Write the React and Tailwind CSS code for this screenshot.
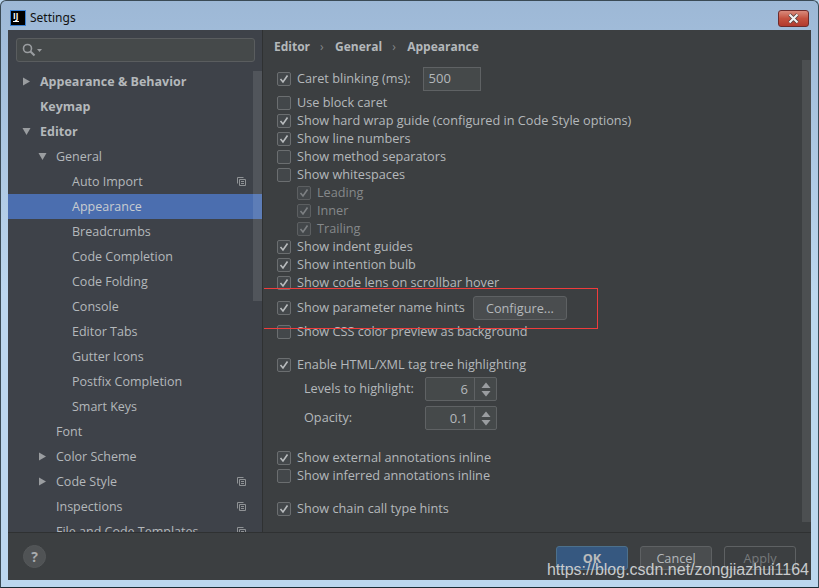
import React from "react";

const FONT = { fontFamily: '"Open Sans", "Noto Sans", sans-serif' };

const TREE = [
  { label: "Appearance & Behavior", indent: 32, bold: true, arrow: "right" },
  { label: "Keymap", indent: 32, bold: true },
  { label: "Editor", indent: 32, bold: true, arrow: "down" },
  { label: "General", indent: 48, arrow: "down" },
  { label: "Auto Import", indent: 64, copy: true },
  { label: "Appearance", indent: 64, selected: true },
  { label: "Breadcrumbs", indent: 64 },
  { label: "Code Completion", indent: 64 },
  { label: "Code Folding", indent: 64 },
  { label: "Console", indent: 64 },
  { label: "Editor Tabs", indent: 64 },
  { label: "Gutter Icons", indent: 64 },
  { label: "Postfix Completion", indent: 64 },
  { label: "Smart Keys", indent: 64 },
  { label: "Font", indent: 48 },
  { label: "Color Scheme", indent: 48, arrow: "right" },
  { label: "Code Style", indent: 48, arrow: "right", copy: true },
  { label: "Inspections", indent: 48, copy: true },
  { label: "File and Code Templates", indent: 48, copy: true },
];

function Arrow({ dir, indent }) {
  return (
    <svg width="9" height="9" viewBox="0 0 9 9" className="absolute top-[8px]" style={{ left: indent - 18 }}>
      {dir === "right" ? <path d="M1 0.5 L8 4.5 L1 8.5 Z" fill="#9a9da0" /> : <path d="M0.5 1 L8.5 1 L4.5 8 Z" fill="#9a9da0" />}
    </svg>
  );
}

function CopyIcon() {
  return (
    <svg width="9" height="9" viewBox="0 0 9 9" className="absolute left-[229px] top-[8px]" fill="none" stroke="#8f9295" strokeWidth="1">
      <path d="M0.5 6.5 V0.5 H6.5" />
      <path d="M2.5 2.5 H8.5 V8.5 H2.5 Z" />
      <path d="M4 4.5 H7 M4 6.5 H7" />
    </svg>
  );
}

function TreeRow({ item }) {
  return (
    <div
      className={`relative h-[25px] shrink-0 leading-[25px] text-[12.5px] whitespace-nowrap ${item.selected ? "bg-[#4b6eaf] text-[#c8ccd0]" : "text-[#b4b8bb]"} ${item.bold ? "font-bold" : ""}`}
      style={{ paddingLeft: item.indent }}
    >
      {item.arrow && <Arrow dir={item.arrow} indent={item.indent} />}
      {item.label}
      {item.copy && <CopyIcon />}
    </div>
  );
}

function Check({ checked, dim }) {
  return (
    <span className={`flex items-center justify-center w-[14px] h-[14px] shrink-0 rounded-[2px] border ${dim ? "border-[#5c5f61]" : "border-[#6b6e70]"} bg-[#43474a]`}>
      {checked && (
        <svg width="10" height="10" viewBox="0 0 10 10" fill="none" stroke={dim ? "#7d8083" : "#b9bcbe"} strokeWidth="1.6">
          <path d="M1.5 5 L4 8 L8.5 1.5" />
        </svg>
      )}
    </span>
  );
}

function CheckRow({ label, checked, dim, className = "", children }) {
  return (
    <div className={`flex items-center h-[18px] gap-[6px] ${dim ? "pl-[20px]" : ""} ${className}`}>
      <Check checked={checked} dim={dim} />
      <span className={`text-[12.7px] whitespace-nowrap ${dim ? "text-[#85888a]" : "text-[#b4b8bb]"}`}>{label}</span>
      {children}
    </div>
  );
}

function Spinner({ label, value, className = "" }) {
  return (
    <div className={`flex items-center h-[24px] pl-[27px] ${className}`}>
      <span className="w-[121px] text-[12.7px] text-[#b4b8bb] whitespace-nowrap">{label}</span>
      <div className="flex h-[24px] w-[72px] rounded-[2px] border border-[#5f6264] bg-[#45494a]">
        <div className="w-[49px] pr-[6px] text-right text-[13px] leading-[22px] text-[#b4b8bb] border-r border-[#5f6264]">{value}</div>
        <div className="flex flex-1 items-center justify-center">
          <svg width="10" height="15" viewBox="0 0 10 15" fill="#9a9da0">
            <path d="M5 0.5 L9.5 6 H0.5 Z" />
            <path d="M5 14.5 L9.5 9 H0.5 Z" />
          </svg>
        </div>
      </div>
    </div>
  );
}

function DialogButton({ label, variant }) {
  const styles = {
    ok: "bg-[#365880] border-[#4c708c] text-[#bbbbbb] font-bold",
    cancel: "bg-[#4a4d4f] border-[#5e6163] text-[#b4b8bb]",
    apply: "bg-[#3c3f41] border-[#5e6163] text-[#777a7c]",
  };
  return (
    <div className={`w-[72px] h-[24px] rounded-[3px] border text-center text-[12.7px] leading-[22px] overflow-hidden ${styles[variant]}`}>
      {label}
    </div>
  );
}

export default function App() {
  return (
    <div className="relative w-[819px] h-[588px] overflow-hidden bg-[#b9d5ee]" style={FONT}>
      <div className="flex flex-col w-full h-full rounded-t-[6px] border border-[#3a4a55] border-b-[#1a2a33] bg-gradient-to-b from-[#9db8d6] via-[#bcd6ee] to-[#bcd6ee] pl-[7px] pr-[7px] pb-[7px]">
        <div className="relative flex items-center h-[29px] shrink-0 gap-[4px] pl-[2px] pt-[5px] text-[12px] text-[#111111]">
          <div className="flex flex-col w-[16px] h-[16px] bg-black border border-[#3b82d6] px-[2px] pt-[1px] text-white">
            <span className="text-[8px] leading-[8px] font-bold">IJ</span>
            <span className="mt-[1px] w-[6px] h-[1px] bg-white" />
          </div>
          <span style={{ fontFamily: '"Noto Sans", sans-serif' }}>Settings</span>
          <div className="absolute right-[2px] top-[9px] flex items-center justify-center w-[31px] h-[17px] rounded-[3px] border border-[#6d2b2b] bg-gradient-to-b from-[#d98a7c] via-[#c4513f] to-[#b23a2e]">
            <svg width="13" height="11" viewBox="0 0 13 11" fill="none">
              <path d="M2.5 1.5 L10.5 9.5 M10.5 1.5 L2.5 9.5" stroke="#4a3a3a" strokeWidth="3.6" />
              <path d="M2.5 1.5 L10.5 9.5 M10.5 1.5 L2.5 9.5" stroke="#f2f2f2" strokeWidth="2.2" />
            </svg>
          </div>
        </div>

        <div className="flex flex-col flex-1 min-h-0 bg-[#3c3f41]">
          <div className="flex flex-1 min-h-0 border-b border-[#2f3132]">
            <aside className="relative flex flex-col w-[255px] shrink-0 overflow-hidden bg-[#3e4249] border-r border-[#2f3132]">
              <div className="flex items-center h-[24px] ml-[8px] mr-[7px] mt-[8px] mb-[7px] shrink-0 gap-[1px] pl-[5px] rounded-[3px] border border-[#5a5d5f] bg-[#45494a]">
                <svg width="14" height="14" viewBox="0 0 14 14" fill="none" stroke="#9a9da0" strokeWidth="1.6">
                  <circle cx="5.5" cy="5.5" r="4" />
                  <path d="M8.5 8.5 L12.5 12.5" strokeWidth="2.2" />
                </svg>
                <svg width="5" height="3" viewBox="0 0 5 3" fill="#9a9da0"><path d="M0 0 H5 L2.5 3 Z" /></svg>
              </div>
              {TREE.map((item) => <TreeRow key={item.label} item={item} />)}
              <div className="absolute right-[0px] top-[41px] w-[9px] h-[230px] bg-white/10" />
            </aside>

            <main className="relative flex-1 min-w-0 pl-[14px] pt-[8px]">
              <div className="flex items-center h-[17px] -ml-[3px] gap-[10px] text-[12px] font-bold text-[#b4b8bb]">
                <span>Editor</span>
                <span className="w-[5px] font-normal text-[#85888a]">›</span>
                <span>General</span>
                <span className="w-[5px] font-normal text-[#85888a]">›</span>
                <span>Appearance</span>
              </div>
              <div className="flex items-center h-[24px] mt-[12px] mb-[3px] gap-[6px]">
                <Check checked />
                <span className="text-[12.7px] text-[#b4b8bb]">Caret blinking (ms):</span>
                <div className="ml-[6px] w-[58px] h-[24px] pl-[5px] border border-[#5f6264] bg-[#45494a] text-[13px] leading-[20px] text-[#b4b8bb]">500</div>
              </div>
              <CheckRow label="Use block caret" />
              <CheckRow checked label="Show hard wrap guide (configured in Code Style options)" />
              <CheckRow checked label="Show line numbers" />
              <CheckRow label="Show method separators" />
              <CheckRow label="Show whitespaces" />
              <CheckRow dim checked label="Leading" />
              <CheckRow dim checked label="Inner" />
              <CheckRow dim checked label="Trailing" />
              <CheckRow checked label="Show indent guides" />
              <CheckRow checked label="Show intention bulb" />
              <CheckRow checked label="Show code lens on scrollbar hover" />
              <CheckRow checked label="Show parameter name hints" className="mt-[7px]">
                <div className="ml-[2px] w-[94px] h-[24px] rounded-[3px] border border-[#5e6163] bg-[#4a4d4f] text-center text-[12.7px] leading-[22px] text-[#b4b8bb]">Configure...</div>
              </CheckRow>
              <CheckRow label="Show CSS color preview as background" className="mt-[6px]" />
              <CheckRow checked label="Enable HTML/XML tag tree highlighting" className="mt-[15px]" />
              <Spinner label="Levels to highlight:" value="6" className="mt-[3px]" />
              <Spinner label="Opacity:" value="0.1" className="mt-[5px]" />
              <CheckRow checked label="Show external annotations inline" className="mt-[19px]" />
              <CheckRow label="Show inferred annotations inline" />
              <CheckRow checked label="Show chain call type hints" className="mt-[15px]" />
              <div className="absolute right-0 top-[30px] bottom-[10px] w-[9px] bg-[#4c4f51]" />
            </main>
          </div>

          <div className="flex items-center justify-between h-[47px] shrink-0 pl-[15px] pr-[15px]">
            <div className="flex items-center justify-center w-[23px] h-[23px] rounded-full border border-[#55585a] bg-[#505355] text-[14px] font-bold text-[#a9acae]">?</div>
            <div className="flex gap-[12px] mt-[2px]">
              <DialogButton variant="ok" label="OK" />
              <DialogButton variant="cancel" label="Cancel" />
              <DialogButton variant="apply" label="Apply" />
            </div>
          </div>
        </div>
      </div>

      <div className="absolute left-[264px] top-[288px] w-[334px] h-[41px] border-t border-r border-b border-[#f03c3c]" />
      <div className="absolute right-[10px] top-[561px] text-[16px] leading-[18px] text-[#c8cbcd] whitespace-nowrap" style={{ fontFamily: '"Liberation Sans", sans-serif' }}>
        https://blog.csdn.net/zongjiazhui1164
      </div>
    </div>
  );
}
